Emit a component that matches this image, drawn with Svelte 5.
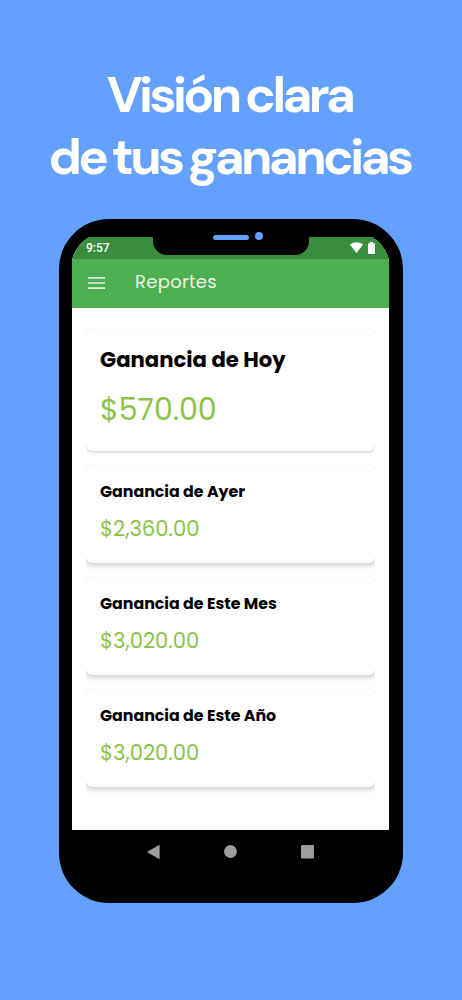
<script>
  const cards = [
    { id: 'hoy', title: 'Ganancia de Hoy', amount: '$570.00', main: true },
    { id: 'ayer', title: 'Ganancia de Ayer', amount: '$2,360.00' },
    { id: 'mes', title: 'Ganancia de Este Mes', amount: '$3,020.00' },
    { id: 'anio', title: 'Ganancia de Este Año', amount: '$3,020.00' }
  ];
</script>

<main class="promo">
  <h1>
    <span>Visión clara</span>
    <span>de tus ganancias</span>
  </h1>

  <div class="phone">
    <div class="notch">
      <span class="speaker"></span>
      <span class="camera"></span>
    </div>
    <div class="screen">
      <div class="status">
        <span class="time">9:57</span>
        <svg class="wifi" width="13" height="11" viewBox="0 0 13 11">
          <path d="M6.5 11 0.3 3Q0 2.5 .5 2.1Q6.5-1.6 12.5 2.1Q13 2.5 12.7 3Z" fill="#fff" />
        </svg>
        <svg class="battery" width="7" height="12" viewBox="0 0 7 12">
          <path d="M2 0h3v1.2h1.3q.7 0 .7.7v9.4q0 .7-.7.7H.7q-.7 0-.7-.7V1.9q0-.7.7-.7H2z" fill="#fff" />
        </svg>
      </div>
      <header>
        <button class="menu" aria-label="Menú">
          <svg width="17" height="12" viewBox="0 0 17 12">
            <path d="M0 .9h17M0 6h17M0 11.1h17" stroke="#e4f4e4" stroke-width="1.7" />
          </svg>
        </button>
        <span class="title">Reportes</span>
      </header>
      <div class="cards">
        {#each cards as card (card.id)}
          <div class="clip">
            <section class="card" class:main={card.main}>
              <h2>{card.title}</h2>
              <p>{card.amount}</p>
            </section>
          </div>
        {/each}
      </div>
    </div>
    <nav>
      <svg width="13" height="16" viewBox="0 0 13 16">
        <path d="M12.6.8v14.4L.6 8.4Q0 8 .6 7.6z" fill="#9c9c9e" />
      </svg>
      <svg width="13" height="13" viewBox="0 0 13 13">
        <circle cx="6.5" cy="6.5" r="6.4" fill="#9c9c9e" />
      </svg>
      <svg width="13" height="14" viewBox="0 0 13 14">
        <rect width="13" height="13.4" rx="1" fill="#9c9c9e" />
      </svg>
    </nav>
  </div>
</main>

<style>
  :global(body) { background: #64a1ff; }
  .promo {
    width: 462px;
    height: 1000px;
    box-sizing: border-box;
    padding-top: 64px;
    overflow: hidden;
    background: #64a1ff;
    font-family: Poppins, Inter, sans-serif;
  }
  h1 {
    margin: 0;
    height: 155px;
    padding-right: 3px;
    color: #fff;
    font: 700 51px/62px "DM Sans", Inter, sans-serif;
    letter-spacing: -3.6px;
    word-spacing: -2px;
    text-align: center;
    white-space: nowrap;
  }
  h1 span { display: block; }

  .phone {
    position: relative;
    width: 344px;
    height: 684px;
    margin: 0 auto;
    box-sizing: border-box;
    padding: 18px 14px 0 13px;
    border-radius: 50px;
    background: #000;
  }
  .notch {
    position: absolute;
    z-index: 1;
    top: 12px;
    left: 94px;
    width: 156px;
    height: 24px;
    box-sizing: border-box;
    padding-left: 60px;
    display: flex;
    align-items: flex-start;
    gap: 6px;
    border-radius: 0 0 14px 14px;
    background: #000;
  }
  .speaker { width: 36px; height: 5px; margin-top: 3.5px; border-radius: 3px; background: #64a1ff; }
  .camera { width: 8px; height: 8px; margin-top: 1px; border-radius: 50%; background: #64a1ff; }

  .screen {
    height: 593px;
    overflow: hidden;
    clip-path: path("M0 23A38 38 0 0 1 17 0H300A38 38 0 0 1 317 23V593H0Z");
    background: #fff;
  }
  .status {
    display: flex;
    height: 22px;
    box-sizing: border-box;
    padding: 5px 14px 0 14px;
    background: #388e3c;
  }
  .time { flex: 1; color: #fff; font: 500 12px/13px Roboto, sans-serif; }
  .wifi { margin-right: 5px; }
  header {
    display: flex;
    align-items: center;
    height: 49px;
    background: #4caf50;
  }
  .menu { display: flex; margin: -2px 30px 0 16px; padding: 0; border: 0; background: none; }
  .title { color: #e9f6e9; font-size: 18px; letter-spacing: .3px; line-height: 24px; margin-top: -4px; }

  .cards {
    display: flex;
    flex-direction: column;
    gap: 14px;
    padding: 21px 14px 0;
  }
  /* shadows are cut off at the left and right edges of each card */
  .clip { clip-path: inset(-3px 0 -9px 0); }
  .card {
    height: 98px;
    box-sizing: border-box;
    padding: 15px 14px 0;
    border-radius: 6px;
    background: #fff;
    box-shadow: 0 3px 4px rgba(0, 0, 0, .18), 0 0 1px rgba(0, 0, 0, .12);
    white-space: nowrap;
  }
  h2 { margin: 0; font-size: 15.8px; line-height: 24px; font-weight: 700; color: #000; }
  p { margin: 11px 0 0; font-size: 21.1px; line-height: 28px; color: #8bc34a; }
  .card.main { height: 122px; padding-top: 15px; box-shadow: 0 2px 2px rgba(0, 0, 0, .12), 0 0 1px rgba(0, 0, 0, .2); }
  .main h2 { font-size: 21.2px; line-height: 32px; }
  .main p { margin-top: 14px; font-size: 30px; line-height: 40px; }

  nav {
    display: flex;
    align-items: center;
    justify-content: center;
    gap: 64px;
    height: 43px;
    margin-right: 1px;
  }
</style>
